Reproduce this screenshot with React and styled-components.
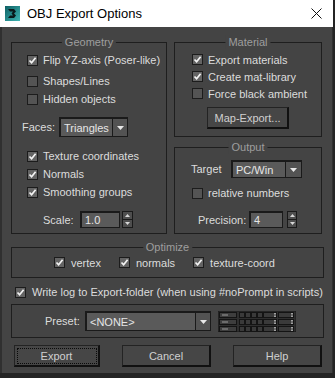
import React from 'react';
import styled, { createGlobalStyle } from 'styled-components';

const GlobalStyle = createGlobalStyle`
  html, body {
    margin: 0;
    padding: 0;
    background: #242424;
  }
  body {
    font-family: "Liberation Sans", Arial, sans-serif;
    font-size: 11px;
    color: #dcdcdc;
  }
  * {
    box-sizing: border-box;
  }
`;

const Window = styled.div`
  width: 333px;
  height: 373px;
  display: flex;
  flex-direction: column;
  background: #444444;
`;

const TitleBar = styled.div`
  height: 27px;
  flex: none;
  background: #ffffff;
  display: flex;
  align-items: center;
  padding: 0 11px 0 5px;
  color: #000;
  font-size: 13px;
`;

const TitleText = styled.span`
  margin-left: 7px;
  flex: 1;
`;

const Body = styled.div`
  flex: 1;
  border-left: 2px solid #303030;
  border-right: 1px solid #303030;
  padding: 15px 0 0 9px;
  display: flex;
  flex-direction: column;
`;

const TopRow = styled.div`
  display: flex;
  gap: 7px;
`;

const Column = styled.div`
  display: flex;
  flex-direction: column;
  gap: 10px;
`;

const Group = styled.div`
  position: relative;
  width: ${p => p.$w}px;
  height: ${p => p.$h}px;
  margin-top: ${p => p.$mt || 0}px;
  margin-left: ${p => p.$ml || 0}px;
  border: 1px solid #1e1e1e;
  padding: ${p => p.$pad || '0'};
  display: flex;
  flex-direction: ${p => (p.$row ? 'row' : 'column')};
  align-items: ${p => (p.$row ? 'center' : 'stretch')};
`;

const Legend = styled.span`
  position: absolute;
  top: -8px;
  left: 50%;
  transform: translateX(-50%);
  padding: 0 3px;
  background: #444444;
  color: #9e9e9e;
  line-height: 14px;
  white-space: nowrap;
`;

const Row = styled.div`
  display: flex;
  align-items: center;
  height: ${p => p.$h || 18}px;
  margin-top: ${p => p.$mt || 0}px;
  padding-left: ${p => p.$pl || 0}px;
  gap: ${p => p.$gap || 0}px;
  white-space: nowrap;
`;

const CheckItem = styled.label`
  display: flex;
  align-items: center;
  gap: ${p => p.$gap || 5}px;
  white-space: nowrap;
`;

const Box = styled.span`
  width: 11px;
  height: 11px;
  flex: none;
  display: flex;
  align-items: center;
  justify-content: center;
  background: ${p => (p.$on ? '#646464' : '#545454')};
  border: 1px solid #1c1c1c;
`;

const Label = styled.span`
  width: ${p => p.$w}px;
  flex: none;
  text-align: ${p => p.$align || 'left'};
  padding-right: ${p => p.$pr || 0}px;
`;

const Select = styled.div`
  width: ${p => p.$w}px;
  height: ${p => p.$h}px;
  flex: none;
  display: flex;
  background: #5a5a5a;
  border: 1px solid #1a1a1a;
  border-top-width: 2px;
  border-left-width: 2px;
  color: #e6e6e6;
`;

const SelectValue = styled.span`
  flex: 1;
  display: flex;
  align-items: center;
  padding-left: 3px;
`;

const SelectArrow = styled.span`
  width: ${p => p.$w || 15}px;
  flex: none;
  border-left: 1px solid #1a1a1a;
  background: #535353;
  display: flex;
  align-items: center;
  justify-content: center;
`;

const Input = styled.div`
  width: ${p => p.$w}px;
  height: 17px;
  flex: none;
  background: #5a5a5a;
  border: 1px solid #1a1a1a;
  border-top-width: 2px;
  border-left-width: 2px;
  display: flex;
  align-items: center;
  padding-left: 3px;
  color: #e6e6e6;
`;

const Spinner = styled.div`
  width: ${p => p.$w || 11}px;
  height: 17px;
  flex: none;
  display: flex;
  flex-direction: column;
  border: 1px solid #1a1a1a;
  background: #4e4e4e;
`;

const SpinHalf = styled.span`
  flex: 1;
  display: flex;
  align-items: center;
  justify-content: center;
  & + & {
    border-top: 1px solid #1a1a1a;
  }
`;

const Button = styled.div`
  width: ${p => p.$w}px;
  height: 22px;
  flex: none;
  display: flex;
  align-items: center;
  justify-content: center;
  border: 1px solid #232323;
  border-right: 2px solid #111;
  border-bottom: 2px solid #111;
  background: #464646;
  color: #d0d0d0;
  outline: ${p => (p.$focus ? '1px dotted #0a0a0a' : 'none')};
  outline-offset: -4px;
`;

const Centered = styled.div`
  display: flex;
  justify-content: center;
  margin-top: ${p => p.$mt || 0}px;
`;

const ButtonRow = styled.div`
  display: grid;
  grid-template-columns: 86px 89px 89px;
  column-gap: 22px;
  margin: 7px 0 0 3px;
`;

const Check = ({ on }) => (
  <Box $on={on}>
    {on && (
      <svg width="9" height="9" viewBox="0 0 9 9">
        <polyline points="1.5,4.5 3.6,6.8 7.6,1.8" fill="none" stroke="#f4f4f4" strokeWidth="1.7" />
      </svg>
    )}
  </Box>
);

const CheckBox = ({ on, children, gap }) => (
  <CheckItem $gap={gap}>
    <Check on={on} />
    <span>{children}</span>
  </CheckItem>
);

const DownArrow = () => (
  <svg width="7" height="4" viewBox="0 0 7 4">
    <polygon points="0,0 7,0 3.5,4" fill="#e8e8e8" />
  </svg>
);

const Spin = ({ w }) => (
  <Spinner $w={w}>
    <SpinHalf>
      <svg width="5" height="3" viewBox="0 0 5 3">
        <polygon points="0,3 5,3 2.5,0" fill="#d8d8d8" />
      </svg>
    </SpinHalf>
    <SpinHalf>
      <svg width="5" height="3" viewBox="0 0 5 3">
        <polygon points="0,0 5,0 2.5,3" fill="#d8d8d8" />
      </svg>
    </SpinHalf>
  </Spinner>
);

const MaxIcon = () => (
  <svg width="15" height="15" viewBox="0 0 15 15">
    <defs>
      <linearGradient id="mx" x1="0" y1="0" x2="1" y2="1">
        <stop offset="0" stopColor="#0d5f63" />
        <stop offset="1" stopColor="#3fb6b4" />
      </linearGradient>
    </defs>
    <rect width="15" height="15" fill="url(#mx)" />
    <polygon points="3,3 9,3 11,5.5 9,7.5 11,9.5 9,12 3,12 5,9.5 8,9.5 6.5,7.5 8,5.5 5,5.5" fill="#0a1a1c" />
  </svg>
);

const CloseIcon = () => (
  <svg width="11" height="11" viewBox="0 0 11 11">
    <path d="M0.5 0.5 L10.5 10.5 M10.5 0.5 L0.5 10.5" stroke="#111" strokeWidth="1" />
  </svg>
);

const PresetTools = () => {
  const rows = [0, 7, 14];
  return (
    <svg width="78" height="21" viewBox="0 0 78 21">
      <rect x="0" y="0" width="78" height="21" fill="#2f2f2f" stroke="#1a1a1a" />
      {rows.map(y => (
        <g key={y} transform={`translate(0 ${y + 1})`}>
          <rect x="1.5" y="0.5" width="17" height="5" fill="#3e3e3e" stroke="#141414" />
          <line x1="4" y1="3" x2="10" y2="3" stroke="#9a9a9a" />
          {[21, 27, 33, 39].map(x => (
            <rect key={x} x={x + 0.5} y="0.5" width="5" height="5" fill="#3a3a3a" stroke="#141414" />
          ))}
          <rect x="45.5" y="0.5" width="13" height="5" fill="#3a3a3a" stroke="#141414" />
          <rect x="56" y="1" width="2" height="1.5" fill="#a0a0a0" />
          <rect x="56" y="3.5" width="2" height="1.5" fill="#a0a0a0" />
          <rect x="60.5" y="0.5" width="15" height="5" fill="#3a3a3a" stroke="#141414" />
          <rect x="73" y="1" width="2" height="1.5" fill="#a0a0a0" />
          <rect x="73" y="3.5" width="2" height="1.5" fill="#a0a0a0" />
        </g>
      ))}
    </svg>
  );
};

const App = () => (
  <>
    <GlobalStyle />
    <Window>
      <TitleBar>
        <MaxIcon />
        <TitleText>OBJ Export Options</TitleText>
        <CloseIcon />
      </TitleBar>
      <Body>
        <TopRow>
          <Group $w={156} $h={192} $pad="8px 0 0 0">
            <Legend>Geometry</Legend>
            <Row $pl={15}><CheckBox on>Flip YZ-axis (Poser-like)</CheckBox></Row>
            <Row $pl={15} $mt={3}><CheckBox>Shapes/Lines</CheckBox></Row>
            <Row $pl={15}><CheckBox>Hidden objects</CheckBox></Row>
            <Row $pl={10} $mt={9} $h={20}>
              <Label $w={37}>Faces:</Label>
              <Select $w={69} $h={20}>
                <SelectValue>Triangles</SelectValue>
                <SelectArrow><DownArrow /></SelectArrow>
              </Select>
            </Row>
            <Row $pl={15} $mt={10}><CheckBox on>Texture coordinates</CheckBox></Row>
            <Row $pl={15}><CheckBox on>Normals</CheckBox></Row>
            <Row $pl={15}><CheckBox on>Smoothing groups</CheckBox></Row>
            <Row $pl={31} $mt={10} $h={17} $gap={2}>
              <Label $w={35}>Scale:</Label>
              <Input $w={40}>1.0</Input>
              <Spin />
            </Row>
          </Group>
          <Column>
            <Group $w={148} $h={95} $pad="8px 0 0 0">
              <Legend>Material</Legend>
              <Row $pl={17} $h={17}><CheckBox on>Export materials</CheckBox></Row>
              <Row $pl={17} $h={17}><CheckBox on>Create mat-library</CheckBox></Row>
              <Row $pl={17} $h={17}><CheckBox>Force black ambient</CheckBox></Row>
              <Centered $mt={5}>
                <Button $w={82}>Map-Export...</Button>
              </Centered>
            </Group>
            <Group $w={148} $h={87} $pad="12px 0 0 0">
              <Legend>Output</Legend>
              <Row $pl={16}>
                <Label $w={40}>Target</Label>
                <Select $w={71} $h={18}>
                  <SelectValue>PC/Win</SelectValue>
                  <SelectArrow $w={16}><DownArrow /></SelectArrow>
                </Select>
              </Row>
              <Row $pl={17} $mt={6}><CheckBox>relative numbers</CheckBox></Row>
              <Row $pl={23} $mt={9} $h={17} $gap={4}>
                <Label $w={47}>Precision:</Label>
                <Input $w={34}>4</Input>
                <Spin w={10} />
              </Row>
            </Group>
          </Column>
        </TopRow>
        <Group $w={313} $h={31} $mt={13} $pad="0 0 0 42px" $row>
          <Legend>Optimize</Legend>
          <Row $gap={18}>
            <CheckBox on gap={6}>vertex</CheckBox>
            <CheckBox on gap={6}>normals</CheckBox>
            <CheckBox on gap={6}>texture-coord</CheckBox>
          </Row>
        </Group>
        <Row $mt={5} $pl={4}>
          <CheckBox on gap={6}>Write log to Export-folder (when using #noPrompt in scripts)</CheckBox>
        </Row>
        <Group $w={313} $h={34} $mt={3} $pad="0 0 0 33px" $row>
          <Row $h={20}>
            <Label $w={40}>Preset:</Label>
            <Select $w={126} $h={20}>
              <SelectValue>&lt;NONE&gt;</SelectValue>
              <SelectArrow><DownArrow /></SelectArrow>
            </Select>
            <Row $pl={7} $h={21}><PresetTools /></Row>
          </Row>
        </Group>
        <ButtonRow>
          <Button $w={86} $focus>Export</Button>
          <Button $w={89}>Cancel</Button>
          <Button $w={89}>Help</Button>
        </ButtonRow>
      </Body>
    </Window>
  </>
);

export default App;
